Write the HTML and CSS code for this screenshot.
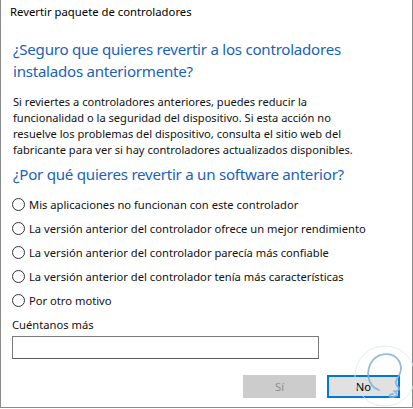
FILE: index.html
```html
<!DOCTYPE html>
<html lang="es">
<head>
<meta charset="utf-8">
<title>Revertir paquete de controladores</title>
<link rel="stylesheet" href="styles.css">
</head>
<body>
<div class="window">
  <div class="titlebar">Revertir paquete de controladores</div>
  <div class="content">
    <h1 class="heading">¿Seguro que quieres revertir a los controladores instalados anteriormente?</h1>
    <p class="body-text">Si reviertes a controladores anteriores, puedes reducir la funcionalidad o la seguridad del dispositivo. Si esta acción no resuelve los problemas del dispositivo, consulta el sitio web del fabricante para ver si hay controladores actualizados disponibles.</p>
    <h2 class="heading heading-2">¿Por qué quieres revertir a un software anterior?</h2>
    <ul class="options">
      <li class="option"><span class="radio"></span>Mis aplicaciones no funcionan con este controlador</li>
      <li class="option"><span class="radio"></span>La versión anterior del controlador ofrece un mejor rendimiento</li>
      <li class="option"><span class="radio"></span>La versión anterior del controlador parecía más confiable</li>
      <li class="option"><span class="radio"></span>La versión anterior del controlador tenía más características</li>
      <li class="option"><span class="radio"></span>Por otro motivo</li>
    </ul>
    <div class="label">Cuéntanos más</div>
    <div class="input"></div>
    <div class="buttons">
      <div class="btn btn-disabled">Sí</div>
      <div class="btn btn-default">No</div>
    </div>
  </div>
  <svg class="watermark" width="64" height="64" viewBox="0 0 64 64" aria-hidden="true">
    <circle cx="32" cy="32" r="30" fill="none" stroke="#dbe9f6" stroke-width="1"/>
    <path d="M26 46 C14 42 12 26 20 16 C27 8 41 8 46 17 C51 26 45 33 43 37 C42 40 44 42 46 44 C47 46 43 48 41 47 C44 49 46 52 40 53 C35 54 36 50 40 50" fill="none" stroke="#7fb0e0" stroke-width="1.8" stroke-linecap="round" stroke-linejoin="round"/>
  </svg>
</div>
</body>
</html>
```
FILE: styles.css
```css
html, body {
  margin: 0;
  padding: 0;
  background: #ffffff;
}
body {
  width: 413px;
  height: 409px;
  overflow: hidden;
  font-family: "Noto Sans", "Open Sans", sans-serif;
  color: #000;
}
.window {
  position: relative;
  box-sizing: border-box;
  width: 413px;
  height: 408px;
  border-left: 1px solid #8a8a8a;
  border-right: 1px solid #8a8a8a;
  border-bottom: 1px solid #8a8a8a;
  background: #fff;
}
.titlebar {
  height: 22px;
  padding: 4px 0 0 9px;
  font-size: 11.3px;
  line-height: 16px;
  color: #000;
}
.content {
  padding: 0 0 0 11px;
}
.heading {
  margin: 12px 0 0 1px;
  font-weight: normal;
  font-size: 15.1px;
  line-height: 22px;
  color: #1a62b8;
  letter-spacing: -0.25px;
  width: 360px;
}
.heading-2 {
  margin-top: 5px;
}
.body-text {
  margin: 12px 0 0 1px;
  font-size: 11.1px;
  line-height: 16px;
  width: 350px;
  color: #111;
}
.options {
  list-style: none;
  margin: 7px 0 0 0;
  padding: 0;
}
.option {
  display: flex;
  align-items: center;
  height: 24px;
  font-size: 11.2px;
  color: #111;
}
.radio {
  box-sizing: border-box;
  width: 13px;
  height: 13px;
  border: 1px solid #333;
  border-radius: 50%;
  margin: 0 4px 0 0;
  flex: none;
}
.label {
  margin-top: 5px;
  font-size: 11.2px;
  line-height: 16px;
  color: #111;
}
.input {
  box-sizing: border-box;
  width: 307px;
  height: 23px;
  margin-top: 3px;
  border: 1px solid #7a7a7a;
  border-bottom-color: #5a5a5a;
  background: #fff;
}
.buttons {
  display: flex;
  gap: 11px;
  margin: 16px 0 0 231px;
}
.btn {
  box-sizing: border-box;
  width: 73px;
  height: 23px;
  display: flex;
  align-items: center;
  justify-content: center;
  font-size: 11.2px;
}
.btn-disabled {
  background: #cccccc;
  color: #8f8f8f;
  border: 1px solid #cccccc;
}
.btn-default {
  background: #e1e1e1;
  color: #000;
  border: 2px solid #0078d7;
}
.watermark {
  position: absolute;
  left: 352px;
  top: 344px;
  opacity: 0.85;
}
```
